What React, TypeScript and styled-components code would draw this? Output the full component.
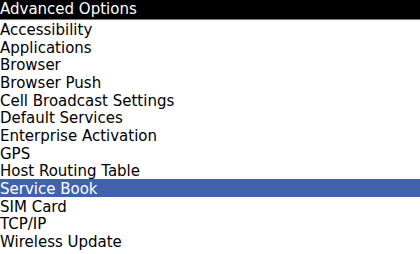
import React from "react";
import styled, { createGlobalStyle } from "styled-components";

const GlobalStyle = createGlobalStyle`
  html, body {
    margin: 0;
    padding: 0;
    background: #fff;
  }
  body {
    font-family: "DejaVu Sans", "Liberation Sans", sans-serif;
  }
`;

const items = [
  "Accessibility",
  "Applications",
  "Browser",
  "Browser Push",
  "Cell Broadcast Settings",
  "Default Services",
  "Enterprise Activation",
  "GPS",
  "Host Routing Table",
  "Service Book",
  "SIM Card",
  "TCP/IP",
  "Wireless Update",
];

const Screen = styled.div`
  width: 420px;
  height: 254px;
  overflow: hidden;
  background: #fff;
`;

const TitleBar = styled.div`
  height: 19px;
  background: #000;
  border-bottom: 1px solid #7a7a7a;
  color: #fff;
  font-size: 15px;
  line-height: 19px;
  white-space: nowrap;
`;

const List = styled.div`
  display: flex;
  flex-direction: column;
`;

const Row = styled.div<{ $selected?: boolean }>`
  box-sizing: border-box;
  flex: none;
  height: 17.67px;
  padding-top: 2px;
  line-height: 17.67px;
  font-size: 15px;
  white-space: nowrap;
  color: ${(p) => (p.$selected ? "#fff" : "#000")};
  background: ${(p) => (p.$selected ? "#4062ad" : "transparent")};
`;

export default function App() {
  return (
    <Screen>
      <GlobalStyle />
      <TitleBar>Advanced Options</TitleBar>
      <List>
        {items.map((item) => (
          <Row key={item} $selected={item === "Service Book"}>
            {item}
          </Row>
        ))}
      </List>
    </Screen>
  );
}
